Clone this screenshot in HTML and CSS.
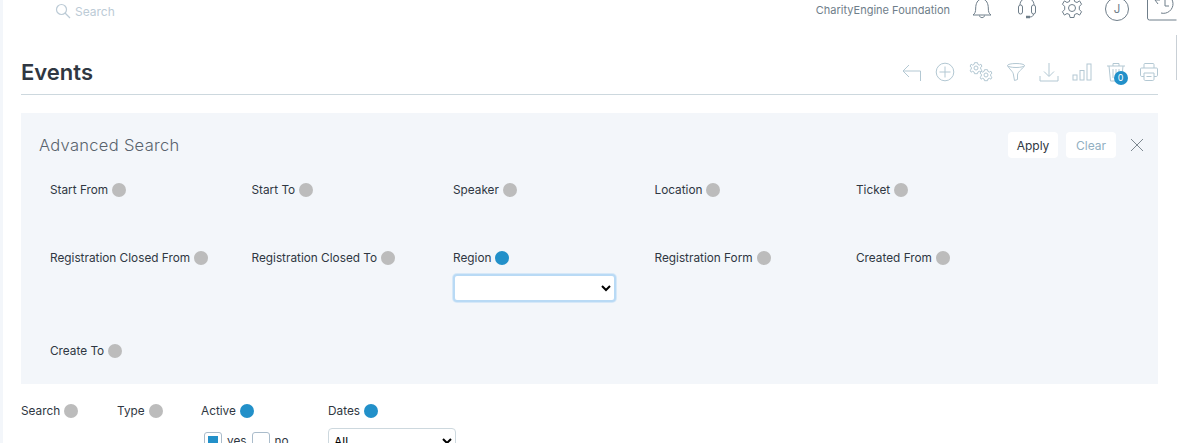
FILE: index.html
```html
<!DOCTYPE html>
<html lang="en">
<head>
<meta charset="utf-8">
<title>Events</title>
<link rel="stylesheet" href="styles.css">
</head>
<body>
<div class="page">
  <header class="topbar">
    <div class="search">
      <svg class="search-icon" width="16" height="16" viewBox="0 0 16 16"><circle cx="6.5" cy="6.5" r="5"/><path d="M10 10l5 5"/></svg>
      <span>Search</span>
    </div>
    <div class="top-right">
      <span class="org">CharityEngine Foundation</span>
      <svg class="ti bell" width="20" height="22" viewBox="0 0 20 22"><path d="M1 17c2-1.500 2.700-3 2.700-7 0-4 1.800-9 6.300-9s6.300 5 6.300 9c0 4 .7 5.500 2.700 7z"/><path d="M7.500 17.500c0 2.800 5 2.800 5 0"/></svg>
      <svg class="ti head" width="20" height="22" viewBox="0 0 20 22"><path d="M3 7C3-2 17-2 17 7"/><rect x="1.500" y="7" width="4" height="9" rx="2"/><rect x="14.500" y="7" width="4" height="9" rx="2"/><path d="M16.500 16c0 2-1.500 3-4 3"/><path class="thick" d="M9 19h4"/></svg>
      <svg class="ti gear" width="22" height="22" viewBox="0 0 22 22"><circle cx="11" cy="10" r="3.500"/><path d="M9 .5h4l.6 3 2.400 1 2.600-1.600 2 3.400-2.300 2v3.400l2.300 2-2 3.400-2.600-1.600-2.400 1-.6 3H9l-.6-3-2.400-1-2.600 1.600-2-3.400 2.300-2V8.300L1.400 6.300l2-3.400L6 4.500l2.400-1z"/></svg>
      <span class="avatar">J</span>
      <svg class="ti hist" width="32" height="24" viewBox="0 0 32 24"><path d="M1.500-4v25a2 2 0 0 0 2 2h27"/><path d="M9 3l3 4M9 3h5"/><path d="M14-2a9.500 9.500 0 1 1 1 18"/><path d="M19 2v7h4"/></svg>
    </div>
  </header>

  <div class="title-row">
    <h1>Events</h1>
    <div class="tools">
      <svg class="tool" width="20" height="20" viewBox="0 0 20 20"><path d="M7 3L1 9l6 6M1 9h17.500v10"/></svg>
      <svg class="tool" width="20" height="20" viewBox="0 0 20 20"><circle cx="10" cy="10" r="8.800"/><path d="M10 4.500v11M4.500 10h11"/></svg>
      <svg class="tool" width="24" height="20" viewBox="0 0 24 20"><circle cx="7" cy="6" r="2"/><path d="M5.500.7h3l.4 1.700 1.500.7 1.500-.9 1 2-1.200 1v2l1.200 1-1 2-1.500-.9-1.500.7-.4 1.700h-3l-.4-1.700-1.500-.7-1.500.9-1-2 1.200-1v-2l-1.200-1 1-2 1.500.9 1.500-.7z"/><circle cx="17" cy="13" r="2"/><path d="M15.500 7.700h3l.4 1.700 1.500.7 1.500-.9 1 2-1.200 1v2l1.200 1-1 2-1.500-.9-1.500.7-.4 1.700h-3l-.4-1.700-1.500-.7-1.500.9-1-2 1.200-1v-2l-1.200-1 1-2 1.500.9 1.500-.7z"/></svg>
      <svg class="tool" width="20" height="20" viewBox="0 0 20 20"><ellipse cx="10" cy="3.500" rx="8.500" ry="2"/><path d="M1.500 3.500c1 3 6 6 6 9.500l1 5.500 3-1V13c0-3.500 6-6.500 7-9.500"/></svg>
      <svg class="tool" width="20" height="20" viewBox="0 0 20 20"><path d="M10 1v13M5 9.500l5 5 5-5M1 14v5h18v-5"/></svg>
      <svg class="tool" width="20" height="20" viewBox="0 0 20 20"><rect x="1" y="13" width="4" height="5"/><rect x="8" y="8.500" width="4" height="9.500"/><rect x="15" y="2" width="4" height="16"/></svg>
      <div class="trash-wrap">
        <svg class="tool" width="20" height="20" viewBox="0 0 20 20"><path d="M1 4h18M7 4V1.500h6V4M3 4l1.500 15h11L17 4M7 7v9M10 7v9M13 7v9"/></svg>
        <span class="badge">0</span>
      </div>
      <svg class="tool" width="20" height="20" viewBox="0 0 20 20"><path d="M5 6V2.500c0-.6.4-1 1-1h8c.6 0 1 .4 1 1V6M5 14.500H3c-1 0-1.500-.5-1.500-1.500V7c0-.7.4-1 1-1h15c.6 0 1 .3 1 1v6c0 1-.5 1.500-1.500 1.500h-2"/><path d="M5 11h10v6c0 .8-.4 1.500-1.200 1.500H6.200c-.8 0-1.200-.7-1.200-1.500zM7.500 14.500h5"/></svg>
    </div>
  </div>

  <section class="panel">
    <div class="panel-head">
      <h2>Advanced Search</h2>
      <div class="panel-actions">
        <button class="btn">Apply</button>
        <button class="btn btn-muted">Clear</button>
        <svg class="close" width="14" height="14" viewBox="0 0 14 14"><path d="M1 1l12 12M13 1L1 13"/></svg>
      </div>
    </div>
    <div class="adv-grid">
      <div class="field row-a"><span class="lbl">Start From <i class="dot"></i></span></div>
      <div class="field row-a"><span class="lbl">Start To <i class="dot"></i></span></div>
      <div class="field row-a"><span class="lbl">Speaker <i class="dot"></i></span></div>
      <div class="field row-a"><span class="lbl">Location <i class="dot"></i></span></div>
      <div class="field row-a"><span class="lbl">Ticket <i class="dot"></i></span></div>
      <div class="field row-b"><span class="lbl">Registration Closed From <i class="dot"></i></span></div>
      <div class="field row-b"><span class="lbl">Registration Closed To <i class="dot"></i></span></div>
      <div class="field row-b"><span class="lbl">Region <i class="dot on"></i></span>
        <select class="region"><option></option></select>
      </div>
      <div class="field row-b"><span class="lbl">Registration Form <i class="dot"></i></span></div>
      <div class="field row-b"><span class="lbl">Created From <i class="dot"></i></span></div>
      <div class="field"><span class="lbl">Create To <i class="dot"></i></span></div>
    </div>
  </section>

  <div class="filters">
    <div class="f-search"><span class="lbl">Search <i class="dot"></i></span></div>
    <div class="f-type"><span class="lbl">Type <i class="dot"></i></span></div>
    <div class="f-active"><span class="lbl">Active <i class="dot on"></i></span>
      <div class="checks">
        <span class="cb checked"><i class="cb-fill"></i></span><span class="cb-text">yes</span>
        <span class="cb"></span><span class="cb-text">no</span>
      </div>
    </div>
    <div class="f-dates"><span class="lbl">Dates <i class="dot on"></i></span>
      <select class="dates"><option>All</option></select>
    </div>
  </div>
  <div class="edge"></div>
</div>
</body>
</html>
```
FILE: styles.css
```css
* { box-sizing: border-box; }
html, body { margin: 0; height: 443px; overflow: hidden; background: #fff; }
body { font-family: "Inter", "Liberation Sans", sans-serif; color: #2f3742; font-size: 11.800px; }
.page { position: relative; height: 443px; overflow: hidden; padding: 0 19px 0 21px; }
.page::before { content: ""; position: absolute; left: 0; top: 0; bottom: 0; width: 3px; background: #f3f6fa; }
.edge { position: absolute; right: 0; top: 35px; height: 45px; width: 1px; background: #c9d0d6; }

.topbar { display: flex; justify-content: space-between; height: 22px; margin-right: -19px; }
.search { display: flex; align-items: center; gap: 4px; padding-left: 34px; color: #bccbd6; font-size: 12px; height: 22px; }
.search-icon { fill: none; stroke: #bccbd6; stroke-width: 1.200; }
.top-right { display: flex; align-items: center; height: 22px; margin-top: -2px; }
.org { color: #6f7e8a; font-size: 11px; margin-right: 22px; padding-top: 2px; }
.ti { fill: none; stroke: #6f7e8a; stroke-width: 1; flex: none; }
.ti .thick { stroke-width: 2.500; }
.bell { margin-right: 25px; }
.head { margin-right: 24px; }
.gear { margin-right: 22px; }
.hist { margin-left: 17px; margin-right: -1px; }
.avatar { width: 24px; height: 24px; border: 1px solid #6f7e8a; border-radius: 50%; display: flex; align-items: center; justify-content: center; color: #6f7e8a; font-size: 11.500px; flex: none; }

.title-row { display: flex; justify-content: space-between; align-items: center; height: 73px; padding-top: 27px; border-bottom: 1px solid #cdd8de; }
h1 { margin: 0; font-size: 22px; font-weight: 600; color: #2f3742; line-height: 48px; }
.tools { display: flex; align-items: center; gap: 13.300px; margin-right: -1px; }
.tool { fill: none; stroke: #b3c8d3; stroke-width: 1; display: block; flex: none; }
.trash-wrap { position: relative; }
.badge { position: absolute; left: 8px; top: 9px; width: 14px; height: 14px; border-radius: 50%; background: #2290c9; color: #fff; font-size: 9px; display: flex; align-items: center; justify-content: center; }

.panel { margin-top: 18px; background: #f3f6fa; height: 271px; }
.panel-head { display: flex; justify-content: space-between; align-items: center; height: 64px; padding: 0 14px 0 18px; }
h2 { margin: 0; font-size: 16.500px; font-weight: 300; color: #59636d; letter-spacing: .3px; }
.panel-actions { display: flex; align-items: center; gap: 8px; }
.btn { height: 26px; width: 50px; padding: 0; border: 0; border-radius: 4px; background: #fff; color: #2f3742; font: inherit; font-size: 12px; }
.btn-muted { color: #91afc2; }
.close { margin-left: 6px; fill: none; stroke: #7d8890; stroke-width: 1; }

.adv-grid { display: grid; grid-template-columns: repeat(5, 201.500px); grid-template-rows: 68px 93px auto; padding: 6px 0 0 29px; }
.lbl { display: flex; align-items: center; gap: 4px; height: 14px; line-height: 14px; white-space: nowrap; }
.dot { width: 14px; height: 14px; border-radius: 50%; background: #bcbcbc; flex: none; }
.dot.on { background: #2290c9; }
.region { display: block; margin-top: 9px; width: 163px; height: 28px; border: 2px solid #b9daf5; border-radius: 4px; background: #fff; font-size: 12px; box-shadow: 0 0 0 1px #d6e8f8; }

.filters { display: flex; margin-top: 20px; }
.f-search { width: 96px; }
.f-type { width: 84px; }
.f-active { width: 127px; }
.f-dates { width: 128px; }
.checks { display: flex; align-items: center; margin-top: 14px; padding-left: 3px; gap: 5px; }
.cb { width: 18px; height: 18px; padding: 3px; border: 1px solid #aabccb; border-radius: 3px; background: #fff; flex: none; }
.cb-fill { display: block; width: 100%; height: 100%; background: #2290c9; }
.cb-text { color: #2f3742; }
.dates { display: block; margin-top: 10px; width: 128px; height: 26px; border: 1px solid #cdd8de; border-radius: 4px; background: #fff; font-size: 12px; font-family: inherit; padding-left: 1px; }
```
